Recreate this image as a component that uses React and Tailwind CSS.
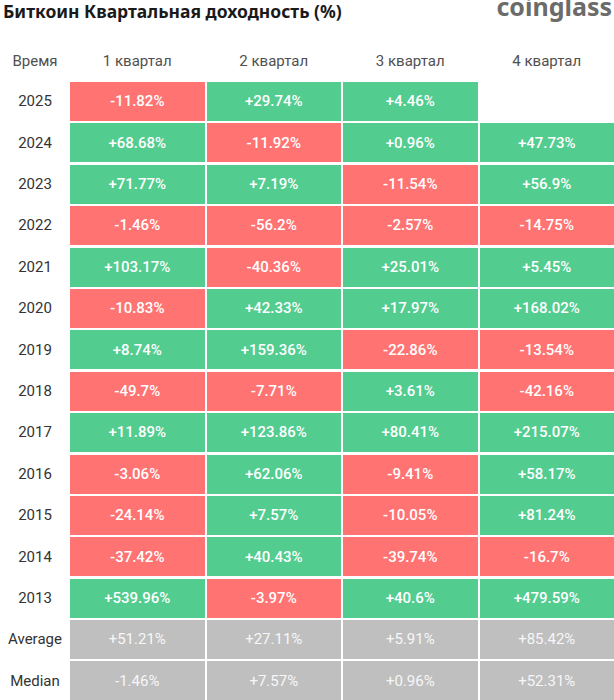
import React from "react";

const G = "g", R = "r";
const rows = [
  ["2025", [["-11.82%", R], ["+29.74%", G], ["+4.46%", G], null]],
  ["2024", [["+68.68%", G], ["-11.92%", R], ["+0.96%", G], ["+47.73%", G]]],
  ["2023", [["+71.77%", G], ["+7.19%", G], ["-11.54%", R], ["+56.9%", G]]],
  ["2022", [["-1.46%", R], ["-56.2%", R], ["-2.57%", R], ["-14.75%", R]]],
  ["2021", [["+103.17%", G], ["-40.36%", R], ["+25.01%", G], ["+5.45%", G]]],
  ["2020", [["-10.83%", R], ["+42.33%", G], ["+17.97%", G], ["+168.02%", G]]],
  ["2019", [["+8.74%", G], ["+159.36%", G], ["-22.86%", R], ["-13.54%", R]]],
  ["2018", [["-49.7%", R], ["-7.71%", R], ["+3.61%", G], ["-42.16%", R]]],
  ["2017", [["+11.89%", G], ["+123.86%", G], ["+80.41%", G], ["+215.07%", G]]],
  ["2016", [["-3.06%", R], ["+62.06%", G], ["-9.41%", R], ["+58.17%", G]]],
  ["2015", [["-24.14%", R], ["+7.57%", G], ["-10.05%", R], ["+81.24%", G]]],
  ["2014", [["-37.42%", R], ["+40.43%", G], ["-39.74%", R], ["-16.7%", R]]],
  ["2013", [["+539.96%", G], ["-3.97%", R], ["+40.6%", G], ["+479.59%", G]]],
  ["Average", [["+51.21%", "x"], ["+27.11%", "x"], ["+5.91%", "x"], ["+85.42%", "x"]]],
  ["Median", [["-1.46%", "x"], ["+7.57%", "x"], ["+0.96%", "x"], ["+52.31%", "x"]]],
];

function Cell({ c }) {
  if (!c) return <div className="flex-1 bg-white" />;
  const [v, t] = c;
  if (t === "x")
    return (
      <div className="flex-1 flex items-center justify-center bg-[#bfbfbf] text-[#f7f7f7] text-[15px] font-normal">
        {v}
      </div>
    );
  return (
    <div
      className={
        "flex-1 flex items-center justify-center text-white text-[15px] font-medium " +
        (t === G ? "bg-[#52cc8f]" : "bg-[#ff7373]")
      }
    >
      {v}
    </div>
  );
}

export default function App() {
  return (
    <div
      className="w-[614px] h-[700px] overflow-hidden bg-white"
      style={{ fontFamily: "Roboto, 'Noto Sans', sans-serif" }}
    >
      <div className="h-[24px] flex items-start justify-between">
        <div
          className="pl-[3px] text-[17.5px] font-bold text-[#1a1a1a] leading-[22px]"
          style={{ fontFamily: "'Noto Sans', sans-serif" }}
        >
          Биткоин Квартальная доходность (%)
        </div>
        <div
          className="mt-[-9px] pr-[2px] text-[25px] font-bold text-[#6b6b6b] leading-[30px]"
          style={{ fontFamily: "'Noto Sans', sans-serif" }}
        >
          coinglass
        </div>
      </div>
      <div className="mt-[18px] h-[38px] flex text-[15px] text-[#505050]">
        <div className="w-[70px] flex items-center justify-center">Время</div>
        <div className="flex-1 flex gap-[2px]">
          {["1 квартал", "2 квартал", "3 квартал", "4 квартал"].map((h) => (
            <div key={h} className="flex-1 flex items-center justify-center">
              {h}
            </div>
          ))}
        </div>
      </div>
      <div className="mt-[2px] flex flex-col gap-[2.4px]">
        {rows.map(([label, cells]) => (
          <div key={label} className="h-[39px] flex shrink-0">
            <div className="w-[70px] flex items-center justify-center text-[15px] text-[#333]">
              {label}
            </div>
            <div className="flex-1 flex gap-[2px]">
              {cells.map((c, i) => (
                <Cell key={i} c={c} />
              ))}
            </div>
          </div>
        ))}
      </div>
    </div>
  );
}
